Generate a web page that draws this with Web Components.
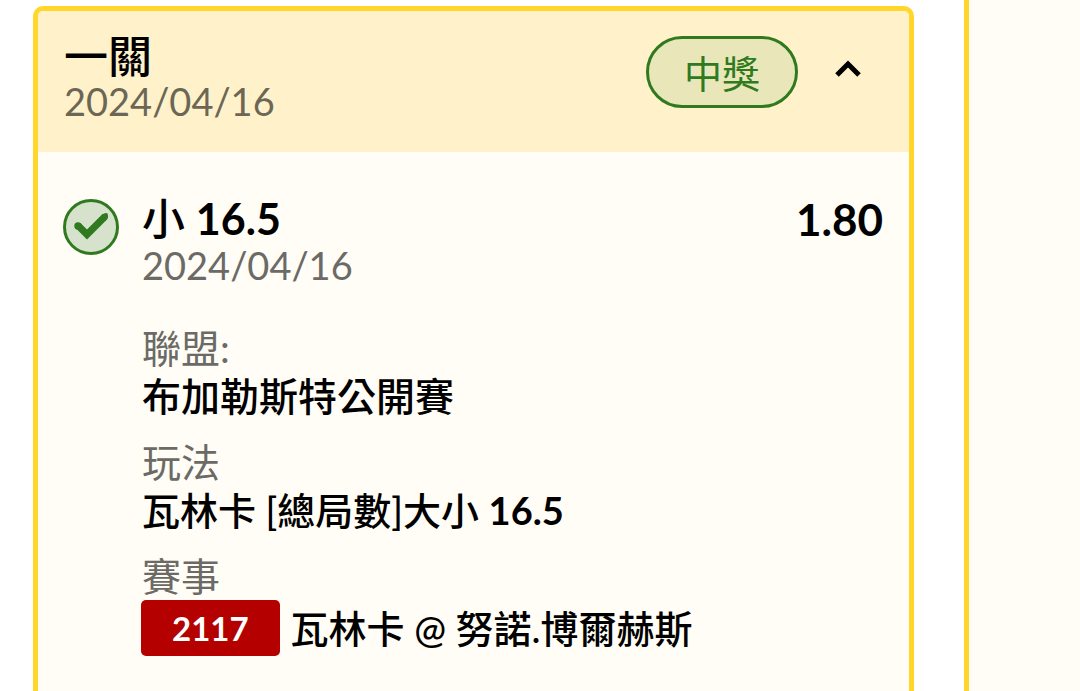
<!DOCTYPE html>
<html lang="zh-Hant">
<head>
<meta charset="utf-8">
<meta name="viewport" content="width=device-width, initial-scale=1">
<title>投注紀錄</title>
<style>
  body {
    margin: 0;
    background: #fff;
    color: #000;
    font-family: Lato, "Noto Sans CJK TC", sans-serif;
  }
  b { font-weight: 700; }
</style>
</head>
<body>
<bet-board>
  <bet-slip name="一關" date="2024/04/16" status="中獎">
    <bet-leg date="2024/04/16" odds="1.80">
      <span slot="pick">小 <b>16.5</b></span>
      <bet-field label="聯盟:">布加勒斯特公開賽</bet-field>
      <bet-field label="玩法" compact>瓦林卡 [總局數]大小 <b>16.5</b></bet-field>
      <bet-field label="賽事" compact><code-tag slot="tag">2117</code-tag>瓦林卡 @ 努諾.博爾赫斯</bet-field>
    </bet-leg>
  </bet-slip>
  <side-panel slot="side"></side-panel>
</bet-board>

<script>
  const define = (name, html, setup) => {
    const template = document.createElement('template');
    template.innerHTML = html;
    customElements.define(name, class extends HTMLElement {
      constructor() {
        super();
        this.attachShadow({ mode: 'open' }).append(template.content.cloneNode(true));
      }
      connectedCallback() {
        for (const node of this.shadowRoot.querySelectorAll('[data-text]')) {
          node.textContent = this.getAttribute(node.dataset.text) || '';
        }
        if (setup) setup(this.shadowRoot);
      }
    });
  };

  define('bet-board', `
    <style>
      :host {
        display: grid;
        grid-template-columns: minmax(0, 1fr) 116px;
        gap: 50px;
        min-height: 100vh;
        padding-left: 33px;
      }
      main { display: flex; flex-direction: column; padding-top: 6px; }
      ::slotted(bet-slip) { flex: 1; }
    </style>
    <main><slot></slot></main>
    <slot name="side"></slot>
  `);

  define('side-panel', `
    <style>
      :host { display: block; background: #fffdf5; border-left: 5px solid #ffd629; }
    </style>
  `);

  define('bet-slip', `
    <style>
      :host {
        display: block;
        border: 5px solid #ffd629;
        border-bottom: 0;
        border-radius: 10px 10px 0 0;
        background: #fffdf5;
      }
      header {
        display: flex;
        align-items: flex-start;
        justify-content: space-between;
        padding: 22px 45px 29px 26px;
        background: #fff2cb;
        border-radius: 5px 5px 0 0;
      }
      h2 { margin: 0; font-size: 44px; line-height: 46px; font-weight: 500; }
      time { display: block; font-size: 38px; line-height: 44px; color: #6c6754; }
      .side { display: flex; align-items: center; gap: 34px; }
      .status {
        box-sizing: border-box;
        height: 72px;
        margin-top: 3px;
        padding: 0 35px;
        border: 3px solid #2f7a1f;
        border-radius: 36px;
        background: #e9e7b9;
        color: #2f7a1f;
        font-size: 38px;
        line-height: 68px;
      }
      button { display: block; margin: 0; padding: 0; border: 0; background: none; color: inherit; }
      svg { display: block; }
      .body { padding: 44px 26px 30px 25px; }
    </style>
    <header>
      <div>
        <h2 data-text="name"></h2>
        <time data-text="date"></time>
      </div>
      <div class="side">
        <span class="status" data-text="status"></span>
        <button type="button" aria-expanded="true" aria-label="收合">
          <svg width="32" height="32" viewBox="0 0 32 32" fill="none" stroke="currentColor" stroke-width="5"><path d="M5 20 16 9l11 11"/></svg>
        </button>
      </div>
    </header>
    <div class="body"><slot></slot></div>
  `, root => {
    const button = root.querySelector('button');
    button.onclick = () => {
      const body = root.querySelector('.body');
      body.hidden = !body.hidden;
      button.setAttribute('aria-expanded', String(!body.hidden));
    };
  });

  define('bet-leg', `
    <style>
      :host { display: grid; grid-template-columns: 58px minmax(0, 1fr); column-gap: 21px; }
      svg { display: block; margin-top: 2px; }
      .top { display: flex; justify-content: space-between; }
      h3, .odds { margin: 0; line-height: 46px; }
      h3 { font-size: 43px; font-weight: 500; }
      .odds { font-size: 44px; font-weight: 700; }
      time { display: block; font-size: 38px; line-height: 46px; color: #6b6a66; }
      .fields { display: grid; gap: 18px; margin-top: 36px; }
    </style>
    <svg width="58" height="58" viewBox="0 0 58 58" role="img" aria-label="中獎">
      <circle cx="28" cy="29" r="26.5" fill="#d6e2cc" stroke="#2f7a1f" stroke-width="3"/>
      <path d="M15 27.500 24 36.500 42 18.500" fill="none" stroke="#2f7a1f" stroke-width="7"/>
      <circle cx="15" cy="28" r="3.700" fill="#2f7a1f"/>
      <path d="M38 17.500 41 15.500Q45 14 45 17.500V20l-3 3Z" fill="#2f7a1f"/>
    </svg>
    <div>
      <div class="top"><h3><slot name="pick"></slot></h3><span class="odds" data-text="odds"></span></div>
      <time data-text="date"></time>
      <div class="fields"><slot></slot></div>
    </div>
  `);

  define('bet-field', `
    <style>
      :host { display: block; font-size: 39px; line-height: 48px; }
      .label { color: #6b6a66; }
      .value { display: flex; align-items: center; gap: 11px; font-weight: 500; }
      :host([compact]) .value { font-size: 38px; }
    </style>
    <div class="label" id="label" data-text="label"></div>
    <div class="value" role="group" aria-labelledby="label"><slot name="tag"></slot><span><slot></slot></span></div>
  `);

  define('code-tag', `
    <style>
      :host {
        display: block;
        padding: 0 31px;
        margin-left: -1px;
        border-radius: 5px;
        background: #b50000;
        color: #fff;
        font-size: 33px;
        line-height: 56px;
        font-weight: 700;
      }
    </style>
    <slot></slot>
  `);
</script>
</body>
</html>
